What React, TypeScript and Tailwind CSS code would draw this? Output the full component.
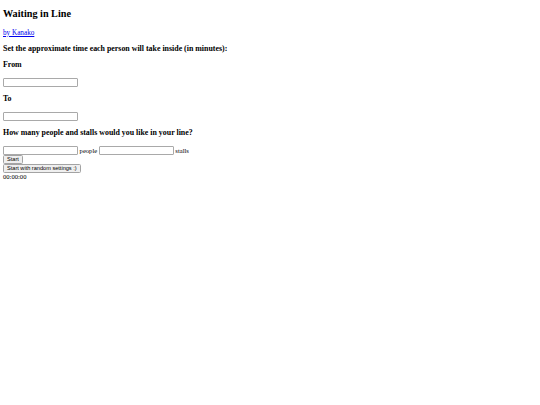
import React from "react";

const serif = "font-['Liberation_Serif',serif]";
const sans = "font-['Liberation_Sans',Arial,sans-serif]";

function TextInput() {
  return (
    <input
      type="text"
      className={`${sans} inline-block align-middle w-[75px] h-[8.5px] bg-white border border-[#a9a9a9] rounded-[1px] px-[1px] text-[5px] outline-none`}
    />
  );
}

function Btn({ children }: { children: React.ReactNode }) {
  return (
    <button
      className={`${sans} flex items-center h-[9px] px-[3px] bg-[#efefef] border border-[#a3a3a3] rounded-[1.5px] text-[5.6px] leading-[7px] text-black`}
    >
      <span>{children}</span>
    </button>
  );
}

export default function App() {
  return (
    <div className={`${serif} bg-white min-h-[405px] w-[540px] px-[3px] text-black text-[6.6px] leading-[1.107]`}>
      <h1 className="pt-[8px] text-[10.2px] font-bold leading-[1.107]">Waiting in Line</h1>
      <p className="mt-[10.3px] text-[7.2px]">
        <a href="#" className="text-[#0000ee] underline">
          by Kanako
        </a>
      </p>
      <h3 className="mt-[7.5px] text-[7.9px] font-bold leading-[1.107]">
        Set the approximate time each person will take inside (in minutes):
      </h3>
      <h3 className="mt-[7.6px] text-[7.9px] font-bold leading-[1.107]">From</h3>
      <div className="mt-[8.2px] h-[9px] flex">
        <TextInput />
      </div>
      <h3 className="mt-[8px] text-[7.9px] font-bold leading-[1.107]">To</h3>
      <div className="mt-[8.2px] h-[9px] flex">
        <TextInput />
      </div>
      <h3 className="mt-[8px] text-[7.9px] font-bold leading-[1.107]">
        How many people and stalls would you like in your line?
      </h3>
      <div className="mt-[8px] h-[8.5px] flex items-center gap-[1.6px] whitespace-nowrap">
        <TextInput />
        <span>people</span>
        <TextInput />
        <span>stalls</span>
      </div>
      <Btn>Start</Btn>
      <Btn>Start with random settings :)</Btn>
      <div>00:00:00</div>
    </div>
  );
}
